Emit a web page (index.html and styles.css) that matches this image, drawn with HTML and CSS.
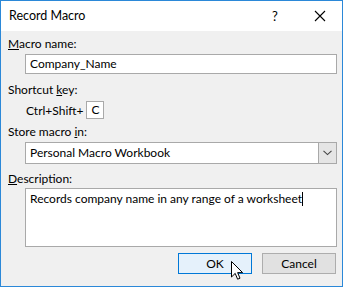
FILE: index.html
```html
<!DOCTYPE html>
<html>
<head>
<meta charset="utf-8">
<link rel="stylesheet" href="styles.css">
</head>
<body>
<div class="dialog">
  <div class="titlebar">
    <span class="title">Record Macro</span>
    <span class="help">?</span>
    <span class="close">
      <svg width="12" height="12" viewBox="0 0 12 12"><path d="M1 1 L11 11 M11 1 L1 11" stroke="#000" stroke-width="1.1" fill="none"/></svg>
    </span>
  </div>
  <div class="content">
    <div class="label l1"><u>M</u>acro name:</div>
    <div class="field input">Company_Name</div>
    <div class="label l2">Shortcut <u>k</u>ey:</div>
    <div class="shortcut">
      <span>Ctrl+Shift+</span>
      <span class="keybox">C</span>
    </div>
    <div class="label l3">Store macro <u>i</u>n:</div>
    <div class="field select">
      <span class="seltext">Personal Macro Workbook</span>
      <span class="dropbtn"><svg width="9" height="6" viewBox="0 0 9 6"><path d="M0.5 0.8 L4.5 4.6 L8.5 0.8" stroke="#444" stroke-width="1.1" fill="none"/></svg></span>
    </div>
    <div class="label l4"><u>D</u>escription:</div>
    <div class="field textarea">Records company name in any range of a worksheet<span class="caret"></span></div>
    <div class="buttons">
      <div class="btn ok">OK</div>
      <div class="btn cancel">Cancel</div>
    </div>
  </div>
  <svg class="pointer" width="13" height="20" viewBox="0 0 13 20"><path d="M0.5 0.5 L0.5 16 L4.2 12.4 L6.6 18.2 L9 17.2 L6.6 11.6 L11.6 11.6 Z" fill="#fff" stroke="#000" stroke-width="1" stroke-linejoin="miter"/></svg>
</div>
</body>
</html>
```
FILE: styles.css
```css
html, body {
  margin: 0;
  padding: 0;
  background: #ffffff;
}
body {
  font-family: Lato, "Noto Sans", sans-serif;
  font-size: 12px;
  color: #000;
}
.dialog {
  position: relative;
  width: 341px;
  height: 285px;
  border: 1px solid #2b88d8;
  background: #f0f0f0;
  display: flex;
  flex-direction: column;
}
.titlebar {
  height: 30px;
  background: #fff;
  display: flex;
  align-items: center;
  padding-left: 8px;
  flex: none;
}
.title {
  font-size: 12.5px;
  flex: 1;
  margin-top: -1px;
}
.help {
  width: 12px;
  font-size: 13px;
  margin-right: 30px;
  margin-top: -1px;
}
.close {
  width: 12px;
  height: 12px;
  margin-right: 16px;
  display: flex;
}
.content {
  padding: 0 5px 0 24px;
  display: flex;
  flex-direction: column;
}
.label {
  margin-left: -17px;
  line-height: 16px;
}
.l1 { margin-top: 5px; }
.l2 { margin-top: 8px; }
.l3 { margin-top: 5px; }
.l4 { margin-top: 7px; }
.field {
  background: #fff;
  border: 1px solid #a9a9a9;
  box-sizing: border-box;
  width: 312px;
}
.input {
  height: 20px;
  margin-top: 2px;
  padding-left: 4px;
  line-height: 18px;
}
.shortcut {
  display: flex;
  align-items: center;
  margin-top: 3px;
  height: 18px;
  padding-left: 1px;
}
.keybox {
  width: 18px;
  height: 18px;
  box-sizing: border-box;
  border: 1px solid #a9a9a9;
  background: #fff;
  margin-left: 3px;
  padding-left: 4px;
  line-height: 16px;
}
.select {
  height: 22px;
  margin-top: 2px;
  display: flex;
  align-items: stretch;
}
.seltext {
  flex: 1;
  padding-left: 4px;
  line-height: 20px;
}
.dropbtn {
  width: 17px;
  background: #e5e5e5;
  border-left: 1px solid #a9a9a9;
  display: flex;
  align-items: center;
  justify-content: center;
}
.textarea {
  height: 59px;
  margin-top: 1px;
  padding: 2px 4px;
  line-height: 15px;
}
.caret {
  display: inline-block;
  width: 1px;
  height: 14px;
  background: #000;
  vertical-align: -3px;
}
.buttons {
  display: flex;
  justify-content: flex-end;
  gap: 10px;
  margin-top: 6px;
  padding-right: 1px;
}
.btn {
  width: 74px;
  height: 21px;
  box-sizing: border-box;
  text-align: center;
  line-height: 19px;
}
.ok {
  background: #e5f1fb;
  border: 1px solid #0078d7;
}
.cancel {
  background: #e1e1e1;
  border: 1px solid #adadad;
}
.pointer {
  position: absolute;
  left: 230px;
  top: 260px;
}
```
